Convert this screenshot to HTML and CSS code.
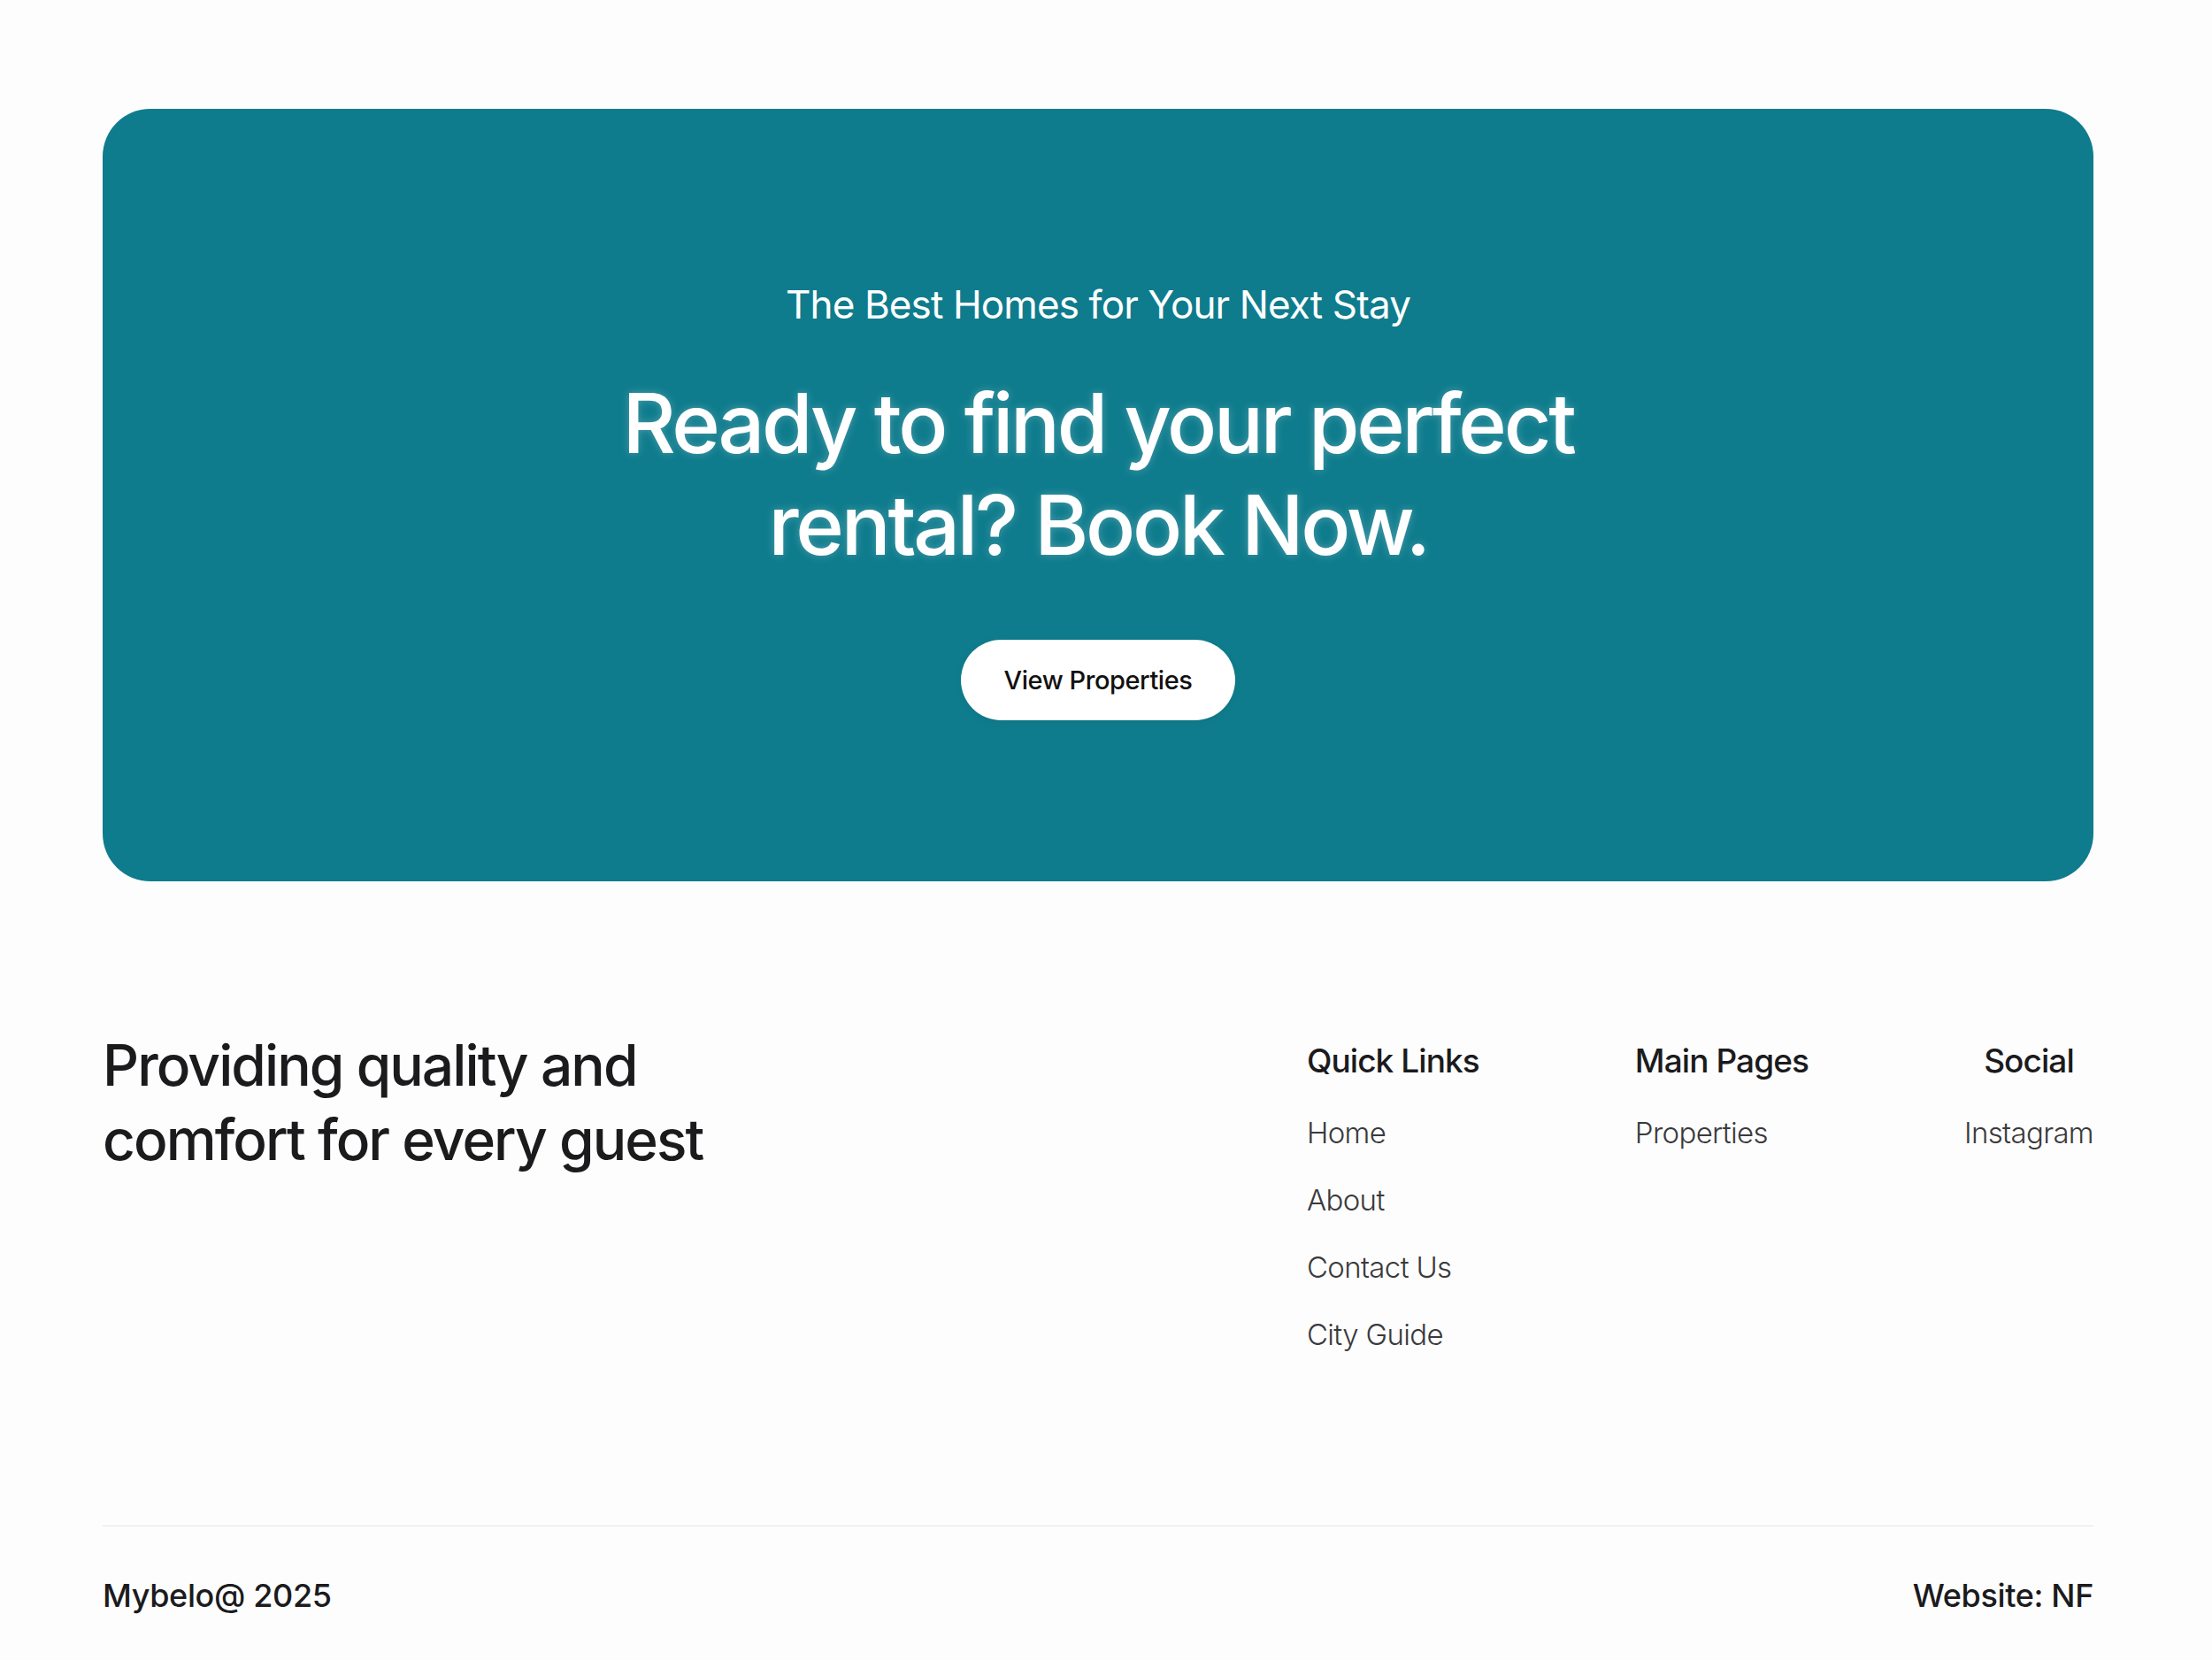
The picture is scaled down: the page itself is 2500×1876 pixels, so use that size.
FILE: index.html
```html
<!DOCTYPE html>
<html lang="en">
<head>
<meta charset="UTF-8" />
<meta name="viewport" content="width=device-width, initial-scale=1.0" />
<title>Mybelo - Book Now</title>
<link rel="stylesheet" href="styles.css">
</head>
<body>
  <main class="page">
    <section class="cta">
      <p class="cta-sub">The Best Homes for Your Next Stay</p>
      <h1 class="cta-title">Ready to find your perfect<br>rental? Book Now.</h1>
      <button class="cta-btn" onclick="location.href='#properties'">View Properties</button>
    </section>

    <footer class="footer">
      <div class="footer-top">
        <h2 class="footer-tagline">Providing quality and<br>comfort for every guest</h2>
        <div class="footer-cols">
          <div class="footer-col">
            <h3>Quick Links</h3>
            <a href="#">Home</a>
            <a href="#">About</a>
            <a href="#">Contact Us</a>
            <a href="#">City Guide</a>
          </div>
          <div class="footer-col">
            <h3>Main Pages</h3>
            <a href="#">Properties</a>
          </div>
          <div class="footer-col footer-col-center">
            <h3>Social</h3>
            <a href="#">Instagram</a>
          </div>
        </div>
      </div>
      <div class="footer-bottom">
        <span>Mybelo@ 2025</span>
        <span>Website: NF</span>
      </div>
    </footer>
  </main>
</body>
</html>
```
FILE: styles.css
```css
html {
  margin: 0;
  padding: 0;
  box-sizing: border-box;
}

*, *::before, *::after {
  box-sizing: inherit;
}

body {
  margin: 0;
  font-family: Inter, "Noto Sans", sans-serif;
  background-color: #fdfdfd;
  color: #1b1b1d;
}

.page {
  padding: 123px 134px 0 116px;
}

/* banner */
.cta {
  height: 873px;
  padding-top: 195px;
  border-radius: 54px;
  background-color: #0f7c8d;
  color: #ffffff;
  display: flex;
  flex-direction: column;
  align-items: center;
  text-align: center;
}

.cta-sub {
  margin: 0;
  font-size: 44px;
  line-height: 53px;
  letter-spacing: -0.02em;
  font-weight: 400;
}

.cta-title {
  margin: 50px 0 0;
  font-size: 93px;
  line-height: 115px;
  font-weight: 500;
  letter-spacing: -0.035em;
  text-shadow: 0 0 10px rgba(255, 255, 255, 0.25);
}

.cta-btn {
  margin-top: 72px;
  height: 91px;
  padding: 0 49px;
  border: none;
  border-radius: 46px;
  background-color: #ffffff;
  color: #111111;
  font-family: inherit;
  font-size: 29px;
  font-weight: 500;
  letter-spacing: -0.015em;
  cursor: pointer;
  box-shadow: 0 2px 10px rgba(0, 0, 0, 0.06);
}

/* footer */
.footer-top {
  margin-top: 166px;
  display: flex;
  justify-content: space-between;
  align-items: flex-start;
  padding-bottom: 193px;
  border-bottom: 1px solid #e6e6e6;
}

.footer-tagline {
  margin: 0;
  font-size: 64px;
  line-height: 84px;
  font-weight: 500;
  letter-spacing: -0.03em;
  color: #1b1b1d;
}

.footer-cols {
  display: flex;
  gap: 176px;
  padding-top: 14px;
}

.footer-col {
  display: flex;
  flex-direction: column;
  align-items: flex-start;
}

.footer-col-center {
  align-items: center;
}

.footer-col h3 {
  margin: 0 0 35px;
  font-size: 37px;
  line-height: 46px;
  font-weight: 500;
  letter-spacing: -0.025em;
  color: #1b1b1d;
}

.footer-col a {
  font-size: 33px;
  line-height: 46px;
  font-weight: 300;
  letter-spacing: -0.02em;
  color: #3a3a3c;
  text-decoration: none;
  margin-bottom: 30px;
}

.footer-col a:last-child {
  margin-bottom: 0;
}

.footer-bottom {
  display: flex;
  justify-content: space-between;
  align-items: center;
  padding: 56px 0 51px;
  font-size: 36px;
  line-height: 44px;
  font-weight: 500;
  letter-spacing: -0.01em;
  color: #1b1b1d;
}
```
